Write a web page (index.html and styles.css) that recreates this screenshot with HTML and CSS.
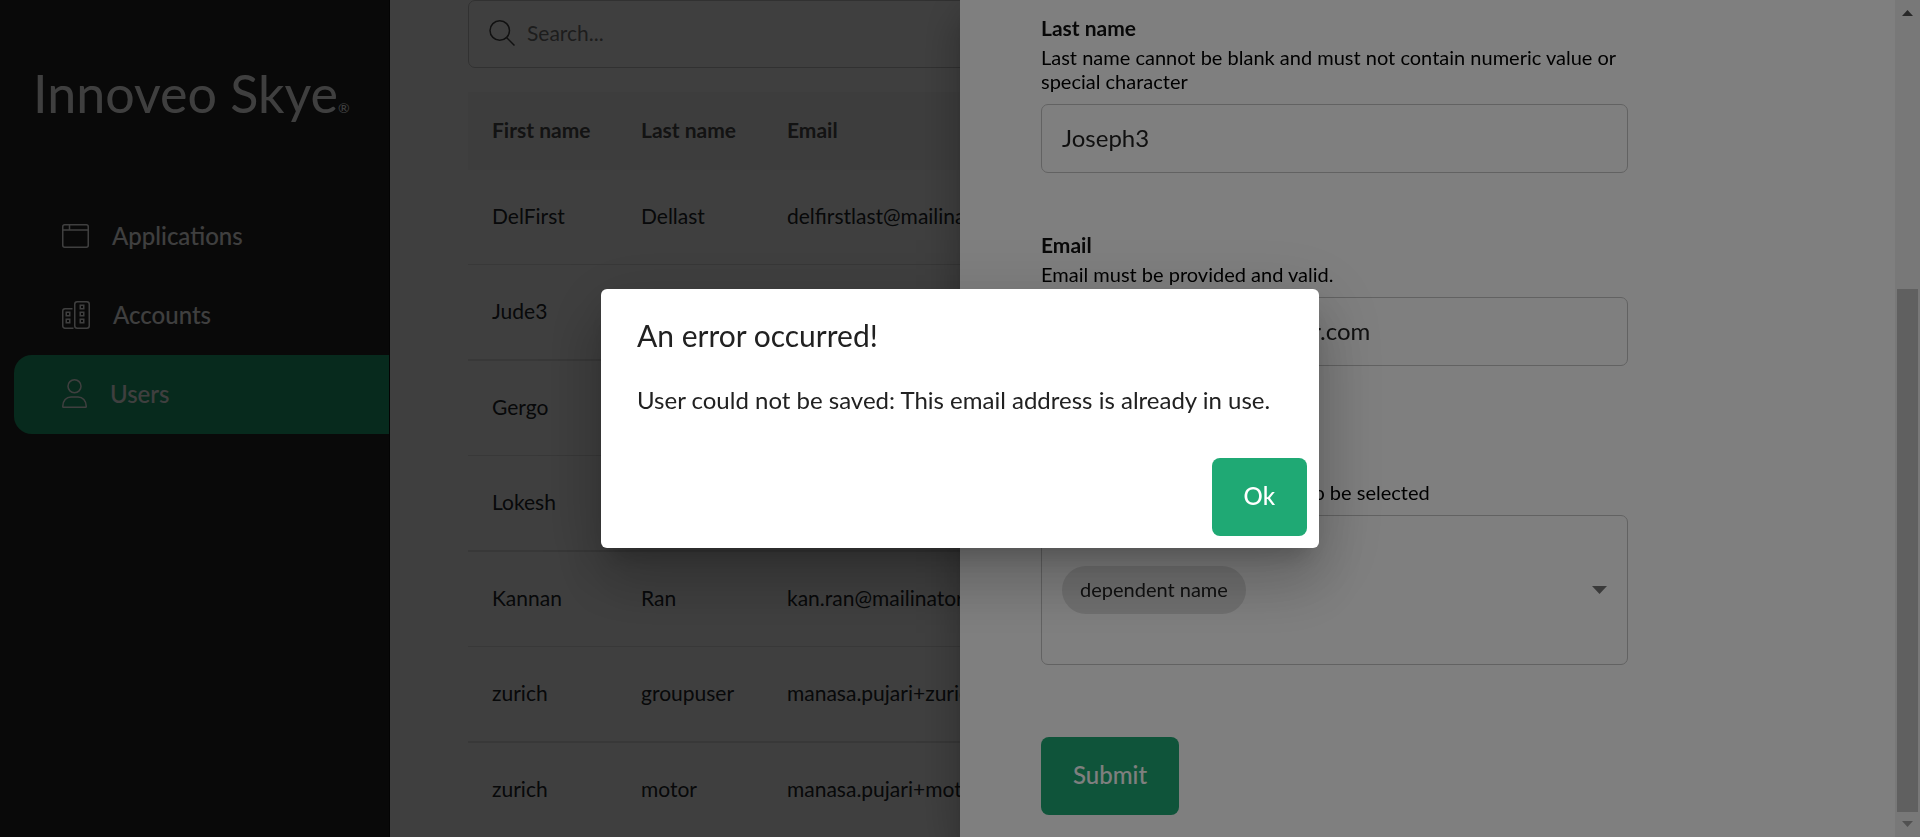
FILE: index.html
```html
<!DOCTYPE html>
<html lang="en">
<head>
<meta charset="utf-8">
<meta name="viewport" content="width=device-width, initial-scale=1">
<title>Innoveo Skye – Users</title>
<link rel="stylesheet" href="styles.css">
</head>
<body>
<div class="app">
  <aside class="sidebar">
    <div class="brand">Innoveo Skye<span class="brand-mark">®</span></div>
    <nav class="nav">
      <a class="nav-item" href="#applications">
        <svg width="27" height="24" viewBox="0 0 27 24" fill="none" stroke="currentColor" stroke-width="1.5"><rect x=".75" y=".75" width="25.5" height="22.5" rx="2"/><path d="M.75 6h25.5M7.5 1v5"/></svg>
        <span>Applications</span>
      </a>
      <a class="nav-item" href="#accounts">
        <svg width="28" height="28" viewBox="0 0 28 28" fill="none" stroke="currentColor" stroke-width="1.5"><rect x="12.75" y=".75" width="14.5" height="26.5" rx="2.5"/><path d="M10.5 7.75H3a2.25 2.25 0 0 0-2.25 2.25v15A2.25 2.25 0 0 0 3 27.250h8.500"/><path d="M18.250 4.250h3.500v3.500h-3.500zM18.250 11.250h3.500v3.500h-3.500zM18.250 18.250h3.500v3.500h-3.500zM4.250 11.250h3.500v3.500h-3.500zM4.250 18.250h3.500v3.500h-3.500z"/></svg>
        <span>Accounts</span>
      </a>
      <a class="nav-item nav-item-active" href="#users" aria-current="page">
        <svg width="25" height="29" viewBox="0 0 25 29" fill="none" stroke="currentColor" stroke-width="1.5" stroke-linejoin="round"><circle cx="12.500" cy="7.250" r="6.500"/><path d="M.75 27.500c0-5.800 3.600-9.500 8.250-9.500h7c4.650 0 8.250 3.700 8.250 9.500 0 .5-.25.750-.75.750h-22c-.5 0-.75-.25-.75-.75z"/></svg>
        <span>Users</span>
      </a>
    </nav>
  </aside>
  <main class="main">
    <label class="search">
      <svg width="26" height="26" viewBox="0 0 26 26" fill="none" stroke="currentColor" stroke-width="1.5"><circle cx="10.750" cy="10.500" r="9.750"/><path d="M17.500 17.500l8 8"/></svg>
      <input class="search-input" type="text" placeholder="Search..." aria-label="Search">
    </label>
    <table class="users">
      <thead>
        <tr><th class="col-first">First name</th><th class="col-last">Last name</th><th>Email</th></tr>
      </thead>
      <tbody>
        <tr><td>DelFirst</td><td>Dellast</td><td>delfirstlast@mailinator.com</td></tr>
        <tr><td>Jude3</td><td></td><td></td></tr>
        <tr><td>Gergo</td><td></td><td></td></tr>
        <tr><td>Lokesh</td><td></td><td></td></tr>
        <tr><td>Kannan</td><td>Ran</td><td>kan.ran@mailinator.com</td></tr>
        <tr><td>zurich</td><td>groupuser</td><td>manasa.pujari+zurich@mailinator.com</td></tr>
        <tr><td>zurich</td><td>motor</td><td>manasa.pujari+motor@mailinator.com</td></tr>
      </tbody>
    </table>
  </main>
</div>

<div class="backdrop"></div>
<section class="drawer" aria-label="Edit user">
  <form class="form">
    <div class="field">
      <label class="field-label" for="last-name">Last name</label>
      <p class="field-help">Last name cannot be blank and must not contain numeric value or special character</p>
      <input class="field-input" id="last-name" type="text" value="Joseph3">
    </div>
    <div class="field field-email">
      <label class="field-label" for="email">Email</label>
      <p class="field-help">Email must be provided and valid.</p>
      <input class="field-input" id="email" type="text" value="joseph.pujari@mailinator.com">
    </div>
    <div class="field field-roles">
      <label class="field-label" for="roles">Groups</label>
      <p class="field-help">At least one user group needs to be selected</p>
      <div class="field-select">
        <select class="chip" id="roles"><option>dependent name</option></select>
        <svg width="15" height="8" viewBox="0 0 15 8"><path d="M0 0h15L7.500 8z" fill="currentColor"/></svg>
      </div>
    </div>
    <button class="button" type="submit">Submit</button>
  </form>
  <div class="scrollbar" aria-hidden="true">
    <svg class="scroll-up" width="11" height="6" viewBox="0 0 11 6"><path d="M0 6l5.500-6L11 6z" fill="currentColor"/></svg>
    <div class="scroll-thumb"></div>
    <svg class="scroll-down" width="11" height="6" viewBox="0 0 11 6"><path d="M0 0h11L5.500 6z" fill="currentColor"/></svg>
  </div>
</section>

<div class="backdrop backdrop-dialog">
  <div class="dialog" role="alertdialog" aria-labelledby="dialog-title" aria-describedby="dialog-text">
    <h2 class="dialog-title" id="dialog-title">An error occurred!</h2>
    <p class="dialog-text" id="dialog-text">User could not be saved: This email address is already in use.</p>
    <div class="dialog-actions"><button class="button" type="button">Ok</button></div>
  </div>
</div>
</body>
</html>
```
FILE: styles.css
```css
* { box-sizing: border-box; }

body {
  margin: 0;
  overflow: hidden;
  font-family: Lato, "Liberation Sans", sans-serif;
  color: #212121;
}

input, select, button { font-family: inherit; }

.app {
  display: flex;
  height: 100vh;
  overflow: hidden;
  background: #fff;
}

/* Sidebar */
.sidebar {
  flex: none;
  width: 390px;
  padding: 61px 0 0 14px;
  border-right: 1px solid #111;
  background: #242424;
  color: #fff;
}

.brand {
  height: 136px;
  padding-left: 19px;
  font-size: 52px;
  line-height: 64px;
  white-space: nowrap;
}

.brand-mark { font-size: 14px; }

.nav-item {
  display: flex;
  align-items: center;
  gap: 23px;
  height: 79px;
  padding: 0 0 2px 48px;
  border-radius: 18px 0 0 18px;
  color: #fff;
  font-size: 24px;
  font-weight: 500;
  text-decoration: none;
}

.nav-item-active { background: #1fa974; }

/* User list */
.main {
  flex: 1;
  min-width: 0;
  padding: 0 78px;
}

.search {
  display: flex;
  align-items: center;
  gap: 12px;
  height: 68px;
  margin-bottom: 24px;
  padding: 0 20px 3px;
  border: 1px solid #c4c4c4;
  border-radius: 7px;
  color: #444;
}

.search-input {
  flex: 1;
  padding: 0;
  border: 0;
  background: none;
  font-size: 21px;
}

.search-input::placeholder { color: #777; }

.users {
  width: 100%;
  border-collapse: separate;
  border-spacing: 0;
  table-layout: fixed;
  font-size: 21px;
  text-align: left;
  color: #212529;
}

.users th {
  height: 78px;
  padding: 0 0 4px 24px;
  background: #f7f7f7;
  font-weight: 700;
  color: #4d4d4d;
}

.users td {
  height: 95px;
  padding: 0 0 4px 24px;
  border-bottom: 1px solid #e0e0e0;
  white-space: nowrap;
}

.users tr:nth-child(even) td {
  height: 96px;
  border-bottom-width: 2px;
}

.col-first { width: 149px; }
.col-last { width: 146px; }

/* Overlays */
.backdrop {
  position: fixed;
  inset: 0;
  background: rgba(0, 0, 0, 0.5);
}

.drawer {
  position: fixed;
  inset: 0 0 0 50%;
  display: flex;
  background: #fff;
  box-shadow: 0 12px 15px -8px rgba(0, 0, 0, 0.2), 0 24px 36px 3px rgba(0, 0, 0, 0.14), 0 9px 45px 8px rgba(0, 0, 0, 0.12);
}

.form {
  flex: 1;
  padding: 15px 267px 0 81px;
}

.field { margin-bottom: 59px; }
.field-email { margin-bottom: 84px; }
.field-roles { margin-bottom: 72px; }

.field-label {
  display: block;
  margin-bottom: 4px;
  font-size: 21px;
  line-height: 26px;
  font-weight: 700;
  color: #111;
}

.field-help {
  margin: 0 0 11px;
  font-size: 20px;
  line-height: 24px;
  color: #000;
}

.field-input,
.field-select {
  display: flex;
  width: 100%;
  border: 1px solid #c4c4c4;
  border-radius: 7px;
  background: #fff;
}

.field-input {
  height: 69px;
  padding: 0 20px 3px;
  font-size: 24px;
  color: #212121;
}

.field-select {
  align-items: center;
  justify-content: space-between;
  height: 150px;
  padding: 0 20px;
  color: #757575;
}

.chip {
  appearance: none;
  height: 48px;
  padding: 0 18px 3px;
  border: 0;
  border-radius: 24px;
  background: #e0e0e0;
  font-size: 20px;
  color: #212121;
}

.button {
  height: 78px;
  padding: 0 32px 4px;
  border: 0;
  border-radius: 8px;
  background: #1fa974;
  font-size: 24px;
  font-weight: 500;
  color: #fff;
}

.scrollbar {
  flex: none;
  display: flex;
  flex-direction: column;
  align-items: center;
  width: 25px;
  padding: 10px 2px;
  background: #f1f1f1;
  color: #505050;
}

.scroll-up,
.scroll-down { flex: none; }

.scroll-thumb {
  flex: none;
  width: 100%;
  height: 64%;
  margin-top: auto;
  margin-bottom: 9px;
  background: #c1c1c1;
}

.scroll-down { color: #a3a3a3; }

/* Error dialog */
.backdrop-dialog {
  display: flex;
  align-items: center;
  justify-content: center;
}

.dialog {
  width: 718px;
  max-width: 90%;
  border-radius: 6px;
  background: #fff;
  box-shadow: 0 16px 23px -10px rgba(0, 0, 0, 0.2), 0 36px 57px 5px rgba(0, 0, 0, 0.14), 0 14px 69px 12px rgba(0, 0, 0, 0.12);
}

.dialog-title {
  margin: 0;
  padding: 23px 36px 24px;
  font-size: 30px;
  line-height: 46px;
  font-weight: 400;
}

.dialog-text {
  margin: 0;
  padding: 0 36px 40px;
  font-size: 24px;
  line-height: 36px;
  white-space: nowrap;
}

.dialog-actions {
  display: flex;
  justify-content: flex-end;
  padding: 0 12px 12px;
}
```
